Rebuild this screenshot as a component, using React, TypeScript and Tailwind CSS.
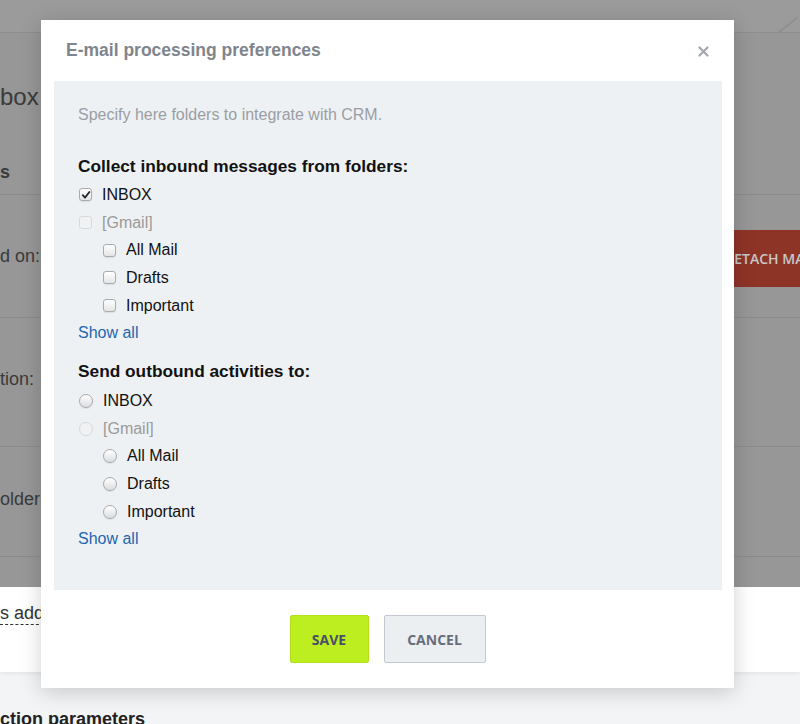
import React from "react";

function Check({ checked = false, disabled = false }: { checked?: boolean; disabled?: boolean }) {
  return (
    <span
      className={
        "relative inline-flex h-[13px] w-[13px] shrink-0 items-center justify-center rounded-[3px] border " +
        (disabled
          ? "border-[#d6d8da] bg-[#f1f2f3]"
          : "border-[#a9abae] bg-gradient-to-b from-[#ffffff] to-[#e4e5e7] shadow-[0_1px_1px_rgba(0,0,0,0.08)]")
      }
    >
      {checked && (
        <svg width="10" height="10" viewBox="0 0 10 10" className="absolute">
          <path d="M1.8 5.2 L4 7.6 L8.4 2" fill="none" stroke="#2a2a2a" strokeWidth="1.9" strokeLinecap="round" strokeLinejoin="round" />
        </svg>
      )}
    </span>
  );
}

function Radio({ disabled = false }: { disabled?: boolean }) {
  return (
    <span
      className={
        "inline-block h-[14px] w-[14px] shrink-0 rounded-full border " +
        (disabled
          ? "border-[#d6d8da] bg-[#f1f2f3]"
          : "border-[#a9abae] bg-gradient-to-b from-[#ffffff] to-[#dcdde0] shadow-[0_1px_1px_rgba(0,0,0,0.08)]")
      }
    />
  );
}

function Row({
  indent = false,
  disabled = false,
  children,
  label,
}: {
  indent?: boolean;
  disabled?: boolean;
  children: React.ReactNode;
  label: string;
}) {
  return (
    <div className={"flex h-[27.7px] items-center " + (indent ? "pl-[25px]" : "pl-px")}>
      {children}
      <span className={"ml-[10px] text-[16px] leading-none " + (disabled ? "text-[#9a9a9a]" : "text-[#111111]")}>{label}</span>
    </div>
  );
}

export default function App() {
  return (
    <div
      className="relative h-[724px] w-full overflow-hidden bg-[#f2f4f6]"
      style={{ fontFamily: "'Liberation Sans', Arial, sans-serif" }}
    >
      {/* Background page (dimmed) */}
      <div className="flex h-[587px] flex-col bg-[#979797] text-[#3a3a3a]">
        <div className="relative h-[33px] shrink-0 border-b border-[#8d8d8d] bg-[#9b9b9b]">
          <svg className="absolute right-0 top-[16px]" width="24" height="18" viewBox="0 0 24 18">
            <path d="M2 17 L22 1" stroke="#8a8a8a" strokeWidth="1.2" fill="none" />
          </svg>
        </div>
        <div className="flex h-[162px] shrink-0 flex-col border-b border-[#8b8b8b]">
          <div className="mt-[50px] text-[24px] leading-[28px]">box</div>
          <div className="mt-[50px] text-[18px] font-bold leading-[22px]">s</div>
        </div>
        <div className="flex h-[123px] shrink-0 items-center border-b border-[#8b8b8b]">
          <div className="w-[722px] shrink-0 text-[18px] leading-[22px]">d on:</div>
          <div className="mt-[4px] flex h-[57px] w-[140px] shrink-0 items-center bg-[#8e3427] pl-[2px] text-[14px] font-semibold text-[#c8c8c8]" style={{ fontFamily: "'Open Sans', sans-serif" }}>
            DETACH MAILBOX
          </div>
        </div>
        <div className="flex h-[129px] shrink-0 items-center border-b border-[#8b8b8b]">
          <div className="mb-[6px] text-[18px] leading-[22px]">tion:</div>
        </div>
        <div className="flex h-[110px] shrink-0 items-center border-b border-[#8b8b8b]">
          <div className="mb-[6px] text-[18px] leading-[22px]">older</div>
        </div>
        <div className="flex-1" />
      </div>
      <div className="flex h-[85px] flex-col bg-white shadow-[0_2px_4px_rgba(0,0,0,0.06)]">
        <div className="mt-[15px] w-fit border-b border-dashed border-[#333] text-[18px] leading-[22px] text-[#333]">s add</div>
      </div>
      <div className="mt-[36px] text-[18px] font-bold leading-[22px] text-[#222]">ction parameters</div>

      {/* Modal */}
      <div className="absolute left-[41px] top-[20px] flex h-[668px] w-[693px] flex-col bg-white shadow-[0_4px_20px_rgba(0,0,0,0.18)]">
        <div className="flex h-[61px] shrink-0 items-center justify-between pl-[25px] pr-[25px]">
          <div className="text-[17.5px] font-bold text-[#7f858d]">E-mail processing preferences</div>
          <svg width="11" height="11" viewBox="0 0 11 11" className="mt-[2px]">
            <path d="M1.5 1.5 L9.5 9.5 M9.5 1.5 L1.5 9.5" stroke="#a3a7ad" strokeWidth="2.2" strokeLinecap="round" />
          </svg>
        </div>
        <div className="mx-[13px] mr-[12px] flex h-[509px] shrink-0 flex-col bg-[#eef1f4] pl-[24px] pt-[23px]">
          <div className="text-[16px] leading-[22px] text-[#9a9ea3]">Specify here folders to integrate with CRM.</div>
          <div className="mt-[29px] text-[17.3px] font-bold leading-[22px] text-[#111]">Collect inbound messages from folders:</div>
          <div className="mt-[4px] flex flex-col">
            <Row label="INBOX">
              <Check checked />
            </Row>
            <Row label="[Gmail]" disabled>
              <Check disabled />
            </Row>
            <Row label="All Mail" indent>
              <Check />
            </Row>
            <Row label="Drafts" indent>
              <Check />
            </Row>
            <Row label="Important" indent>
              <Check />
            </Row>
            <div className="flex h-[27.7px] items-center text-[16px] text-[#1f66b0]">Show all</div>
          </div>
          <div className="mt-[13px] text-[17.3px] font-bold leading-[22px] text-[#111]">Send outbound activities to:</div>
          <div className="mt-[5px] flex flex-col">
            <Row label="INBOX">
              <Radio />
            </Row>
            <Row label="[Gmail]" disabled>
              <Radio disabled />
            </Row>
            <Row label="All Mail" indent>
              <Radio />
            </Row>
            <Row label="Drafts" indent>
              <Radio />
            </Row>
            <Row label="Important" indent>
              <Radio />
            </Row>
            <div className="flex h-[27.7px] items-center text-[16px] text-[#1f66b0]">Show all</div>
          </div>
        </div>
        <div className="flex justify-center gap-[15px] pt-[25px]" style={{ fontFamily: "'Open Sans', sans-serif" }}>
          <button className="flex h-[48px] w-[79px] items-center justify-center rounded-[2px] border border-[#b3e01c] bg-[#bdee1f] text-[14px] font-bold text-[#4a4e6a]">
            SAVE
          </button>
          <button className="flex h-[48px] w-[102px] items-center justify-center rounded-[2px] border border-[#c3c8d0] bg-[#eceff2] text-[14px] font-bold text-[#666d7a]">
            CANCEL
          </button>
        </div>
      </div>
    </div>
  );
}
